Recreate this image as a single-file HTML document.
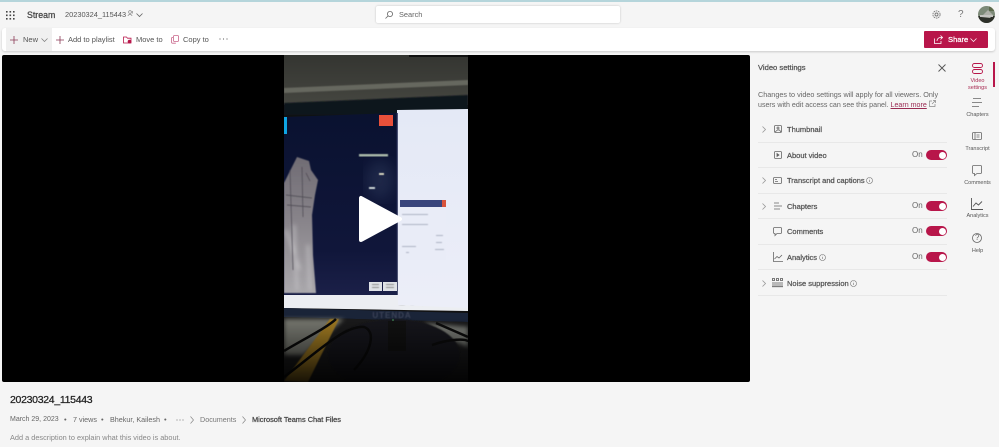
<!DOCTYPE html>
<html><head><meta charset="utf-8">
<style>
*{box-sizing:border-box}
html,body{margin:0;padding:0;background:#f5f5f5}
body{width:999px;height:447px;overflow:hidden;position:relative;font-family:"Liberation Sans",sans-serif;color:#424242;filter:blur(.3px)}
.t{position:absolute;white-space:nowrap;font-size:7.5px;line-height:10px}
.sb{-webkit-text-stroke:.25px currentColor}
.a{position:absolute}
svg.i{position:absolute;overflow:visible;fill:none;stroke:#555;stroke-width:1}
.row{position:absolute;left:758px;width:189px;height:1px;background:#e8e8e8}
.lbl{position:absolute;left:787px;font-size:7.5px;line-height:10px;-webkit-text-stroke:.25px #555;color:#555;white-space:nowrap}
.on{position:absolute;left:912px;font-size:8px;line-height:10px;color:#666}
.tg{position:absolute;left:926px;width:21px;height:10px;border-radius:5px;background:#b8164a}
.tg:after{content:"";position:absolute;right:1.500px;top:1.500px;width:7px;height:7px;border-radius:50%;background:#fff}
.rl{position:absolute;left:962px;width:31px;text-align:center;font-size:5.500px;line-height:6.500px;color:#555}
</style></head><body>
<div class="a" style="left:0;top:0;width:999px;height:2px;background:#b5d5db"></div>

<svg class="i" style="left:6px;top:11px;stroke:none;fill:#444" width="9" height="9">
<rect x="0" y="0" width="1.600" height="1.600"/><rect x="3.500" y="0" width="1.600" height="1.600"/><rect x="7" y="0" width="1.600" height="1.600"/>
<rect x="0" y="3.500" width="1.600" height="1.600"/><rect x="3.500" y="3.500" width="1.600" height="1.600"/><rect x="7" y="3.500" width="1.600" height="1.600"/>
<rect x="0" y="7" width="1.600" height="1.600"/><rect x="3.500" y="7" width="1.600" height="1.600"/><rect x="7" y="7" width="1.600" height="1.600"/></svg>
<div class="t sb" style="left:27px;top:10px;font-size:8.800px;color:#444">Stream</div>
<div class="t" style="left:65px;top:10px;font-size:7.400px;color:#555">20230324_115443</div>
<svg class="i" style="left:127px;top:10px;stroke:#888;stroke-width:.7" width="7" height="7"><circle cx="3" cy="2" r="1.400"/><path d="M1 6c.3-2 3.700-2 4 0M5.500 1v2.500"/></svg>
<svg class="i" style="left:136px;top:13px;stroke:#666;stroke-width:.8" width="7" height="4"><path d="M.5.5l3 3 3-3"/></svg>

<div class="a" style="left:376px;top:6px;width:244px;height:17px;background:#fff;border-radius:2px;box-shadow:0 0 2px rgba(0,0,0,.2)"></div>
<svg class="i" style="left:385px;top:11px;stroke:#666;stroke-width:.8" width="8" height="8"><circle cx="5" cy="3" r="2.600"/><path d="M3 5L.5 7.500"/></svg>
<div class="t" style="left:399px;top:10px;color:#666;font-size:7.400px">Search</div>

<svg class="i" style="left:932px;top:10px;stroke:#777;stroke-width:.9" width="9" height="9"><circle cx="4.500" cy="4.500" r="1.500"/><circle cx="4.500" cy="4.500" r="3.600" stroke-dasharray="1.600 .7"/></svg>
<div class="t" style="left:958px;top:10px;font-size:10px;color:#777">?</div>
<svg class="a" style="left:978px;top:6px" width="17" height="17"><defs><clipPath id="c"><circle cx="8.500" cy="8.500" r="8.500"/></clipPath></defs><g clip-path="url(#c)"><rect width="17" height="17" fill="#7d8a78"/><rect y="10" width="17" height="7" fill="#2d3029"/><path d="M3 11L10 4l5 5-3 3z" fill="#aeb0a8"/><rect x="2" y="9" width="13" height="2" fill="#c4c4c0"/><rect x="11" width="6" height="5" fill="#5c6a4c"/></g></svg>

<div class="a" style="left:2px;top:28px;width:993px;height:23px;background:#fff;border-radius:3px;box-shadow:0 1px 2px rgba(0,0,0,.18)"></div>
<div class="a" style="left:6px;top:28px;width:46px;height:23px;background:#f0f0f0"></div>
<svg class="i" style="left:10px;top:36px;stroke:#8a3a55;stroke-width:.8" width="8" height="8"><path d="M4 0v8M0 4h8"/></svg>
<div class="t" style="left:23px;top:35px;color:#555">New</div>
<svg class="i" style="left:41px;top:38px;stroke:#777;stroke-width:.7" width="7" height="4"><path d="M.5.5l3 3 3-3"/></svg>
<svg class="i" style="left:56px;top:36px;stroke:#8a3a55;stroke-width:.8" width="8" height="8"><path d="M4 0v8M0 4h8"/></svg>
<div class="t" style="left:68px;top:35px;color:#555">Add to playlist</div>
<svg class="i" style="left:123px;top:36px;stroke:#b8164a;stroke-width:.8" width="9" height="8"><path d="M.5 7V1h3l1 1.200h3.500V7z"/><circle cx="6.500" cy="5.600" r="1.800" fill="#b8164a" stroke="none"/></svg>
<div class="t" style="left:136px;top:35px;color:#555">Move to</div>
<svg class="i" style="left:171px;top:35px;stroke:#c9668a;stroke-width:.8" width="8" height="9"><rect x="2.500" y=".5" width="5" height="6" rx="1"/><path d="M2 2.500H1.200a.7.7 0 0 0-.7.7v4a1 1 0 0 0 1 1h3.300"/></svg>
<div class="t" style="left:183px;top:35px;color:#555">Copy to</div>
<svg class="a" style="left:219px;top:38px" width="10" height="2"><circle cx="1" cy="1" r=".6" fill="#666"/><circle cx="4.500" cy="1" r=".6" fill="#666"/><circle cx="8" cy="1" r=".6" fill="#666"/></svg>

<div class="a" style="left:924px;top:31px;width:64px;height:17px;background:#b8164a;border-radius:1px"></div>
<svg class="i" style="left:934px;top:35px;stroke:#fff;stroke-width:.8" width="9" height="9"><path d="M.5 3.500v5h6.500V6M3 6c0-2 1.500-3.500 3.500-3.500h2M6.500.5l2 2-2 2"/></svg>
<div class="t sb" style="left:948px;top:35px;color:#fff;font-size:7.600px">Share</div>
<svg class="i" style="left:970px;top:38px;stroke:#fff;stroke-width:.7" width="7" height="4"><path d="M.5.5l3 3 3-3"/></svg>

<div class="a" style="left:2px;top:55px;width:748px;height:327px;background:#000;border-radius:2px"></div>
<svg class="a" style="left:284px;top:55px" width="184" height="327">
<defs>
<linearGradient id="g1" x1="0" y1="0" x2="0" y2="1"><stop offset="0" stop-color="#0a1230"/><stop offset=".75" stop-color="#10163a"/><stop offset="1" stop-color="#1b2048"/></linearGradient>
<linearGradient id="g2" x1="0" y1="0" x2="0" y2="1"><stop offset="0" stop-color="#e4e9f6"/><stop offset="1" stop-color="#eceef8"/></linearGradient>
<linearGradient id="g3" x1="0" y1="0" x2="0" y2="1"><stop offset="0" stop-color="#343531"/><stop offset="1" stop-color="#454640"/></linearGradient>
<linearGradient id="p" x1="0" y1="0" x2="0" y2="1"><stop offset="0" stop-color="#706c74"/><stop offset=".5" stop-color="#8a868c"/><stop offset="1" stop-color="#aaa8ac"/></linearGradient>
<linearGradient id="fd" x1="0" y1="0" x2="0" y2="1"><stop offset="0" stop-color="#000" stop-opacity="0"/><stop offset="1" stop-color="#000" stop-opacity=".85"/></linearGradient>
<filter id="b"><feGaussianBlur stdDeviation=".6"/></filter>
<filter id="b2"><feGaussianBlur stdDeviation="2"/></filter>
<filter id="b3"><feGaussianBlur stdDeviation="7"/></filter>
</defs>
<rect width="184" height="327" fill="#111"/>
<rect width="184" height="50" fill="url(#g3)"/>
<path d="M0 33L184 25v5L0 38z" fill="#66675f" filter="url(#b)"/>
<rect x="125" y="0" width="60" height="2" fill="#111"/>
<path d="M0 48L184 40v20H0z" fill="#10131c" filter="url(#b)"/>
<path d="M113 55L184 54v200L113 250z" fill="url(#g2)"/>
<path d="M0 62L113 58V240H0z" fill="url(#g1)"/>
<rect x="0" y="62" width="3" height="17" fill="#0ea5e4"/>
<rect x="95" y="60" width="14" height="11" fill="#e8503a"/>
<rect x="75" y="99" width="29" height="2.500" fill="#a8b8a8" filter="url(#b)"/>
<ellipse cx="96" cy="125" rx="14" ry="20" fill="#2d3a5c" filter="url(#b3)" opacity=".5"/>
<rect x="95" y="118" width="5" height="2" fill="#d8d8c0" filter="url(#b)"/>
<rect x="85" y="132" width="6" height="2" fill="#cfd8d8" filter="url(#b)"/>
<path d="M0 128L13 102 25 106 27 115 34 125 31 140 28 160 29 200 32 238H0z" fill="url(#p)" filter="url(#b)"/>
<path d="M2 175l14 40M10 170l3 65M24 190l2 45" stroke="#c4c2c6" stroke-width="2" fill="none" filter="url(#b2)"/>
<path d="M6 115l3 100M18 112l1 50M2 140l26 3M3 150l24 2M22 118l4 8" stroke="#4a4650" stroke-width=".7" fill="none" filter="url(#b)"/>
<path d="M113 58V240" stroke="#1a2148" stroke-width="1.500"/>
<path d="M0 240H114V250L184 253V256L0 253z" fill="#eceef2"/>
<rect x="85" y="227" width="13" height="9" fill="#dfe2e6"/>
<rect x="99" y="227" width="14" height="9" fill="#dfe2e6"/>
<g filter="url(#b)"><rect x="88" y="229" width="7" height="1" fill="#888"/><rect x="88" y="232" width="7" height="1" fill="#888"/><rect x="102" y="229" width="8" height="1" fill="#888"/><rect x="102" y="232" width="8" height="1" fill="#888"/></g>
<rect x="116" y="150" width="46" height="55" fill="#e9ecf7"/>
<rect x="116" y="145" width="46" height="7" fill="#39457c"/>
<rect x="158" y="145" width="4" height="7" fill="#d8533c"/>
<g filter="url(#b)" fill="#aeb3c4"><rect x="118" y="159" width="26" height="1"/><rect x="118" y="169" width="26" height="1"/><rect x="152" y="180" width="7" height="1"/><rect x="152" y="187" width="6" height="1"/><rect x="118" y="191" width="14" height="1"/><rect x="151" y="194" width="9" height="1"/><rect x="122" y="197" width="3" height="1"/></g>
<path d="M0 253L184 258V267L0 262z" fill="#1a2438"/>
<path d="M0 262L184 267V327H0z" fill="#1a1a1b"/>
<path d="M0 264H60L20 300H0z" fill="#77786f" filter="url(#b2)"/>
<path d="M140 268L184 272V292L160 282z" fill="#787a74" filter="url(#b2)"/>
<ellipse cx="110" cy="300" rx="66" ry="36" fill="#19181a" filter="url(#b)"/>
<path d="M0 326L46 264H55L24 327z" fill="#a27c22" filter="url(#b)"/>
<path d="M0 296C20 284 44 272 52 264M0 322C30 300 60 270 80 272C92 276 88 296 70 315" stroke="#0a0a0a" stroke-width="2.500" fill="none"/>
<path d="M148 290C165 284 184 283 184 287M152 268L184 282" stroke="#0c0c0c" stroke-width="2.500" fill="none"/>
<rect x="104" y="266" width="18" height="30" fill="#111"/>
<rect y="262" width="184" height="65" fill="url(#fd)"/>
<text x="108" y="263" text-anchor="middle" font-family="Liberation Sans" font-size="8" font-weight="bold" fill="#3a4256" letter-spacing="1" filter="url(#b)">UTENDA</text>
<circle cx="109" cy="265" r=".8" fill="#4da860"/>
</svg>
<svg class="a" style="left:357px;top:192px" width="48" height="54"><path d="M4 6V48L43 27z" fill="#fff" stroke="#fff" stroke-width="4" stroke-linejoin="round"/></svg>

<div class="t sb" style="left:758px;top:63px;color:#555;font-size:7.600px">Video settings</div>
<svg class="i" style="left:938px;top:64px;stroke:#555;stroke-width:.9" width="8" height="8"><path d="M.5.5l7 7M7.500.5l-7 7"/></svg>
<div class="t" style="left:758px;top:90px;color:#666;font-size:7.250px">Changes to video settings will apply for all viewers. Only</div>
<div class="t" style="left:758px;top:100px;color:#666;font-size:7.100px">users with edit access can see this panel. <span style="color:#9a2a52;text-decoration:underline">Learn more</span></div>
<svg class="i" style="left:929px;top:100px;stroke:#888;stroke-width:.7" width="7" height="7"><path d="M3 1H.5v5.500h5.500V4M3 4l3.500-3.500M4 .5h2.500V3"/></svg>

<svg class="i" style="left:762px;top:126px;stroke:#999;stroke-width:.8" width="4" height="7"><path d="M.5.5l3 3-3 3"/></svg>
<svg class="i" style="left:774px;top:125px;stroke:#666;stroke-width:.8" width="8" height="8"><rect x=".5" y=".5" width="7" height="7" rx="1"/><circle cx="4" cy="3" r="1"/><path d="M1 7l2.500-2h2L7 7"/></svg>
<div class="lbl" style="top:125px">Thumbnail</div>
<div class="row" style="top:142px"></div>
<svg class="i" style="left:774px;top:151px;stroke:#666;stroke-width:.8" width="8" height="8"><rect x=".5" y=".5" width="7" height="7" rx="1"/><path d="M3 2.500v3l2-1.500z" fill="#555"/></svg>
<div class="lbl" style="top:151px">About video</div>
<div class="on" style="top:150px">On</div><div class="tg" style="top:150px"></div>
<div class="row" style="top:167px"></div>
<svg class="i" style="left:762px;top:177px;stroke:#999;stroke-width:.8" width="4" height="7"><path d="M.5.5l3 3-3 3"/></svg>
<svg class="i" style="left:773px;top:177px;stroke:#666;stroke-width:.8" width="9" height="7"><rect x=".5" y=".5" width="8" height="6" rx="1"/><path d="M2 2.500h2M2 4.500h3"/></svg>
<div class="lbl" style="top:176px">Transcript and captions</div>
<svg class="i" style="left:866px;top:177px;stroke:#777;stroke-width:.6" width="7" height="7"><circle cx="3.500" cy="3.500" r="3"/><path d="M3.500 3v2M3.500 1.800v.5"/></svg>
<div class="row" style="top:193px"></div>
<svg class="i" style="left:762px;top:203px;stroke:#999;stroke-width:.8" width="4" height="7"><path d="M.5.5l3 3-3 3"/></svg>
<svg class="i" style="left:774px;top:202px;stroke:#666;stroke-width:.8" width="8" height="8"><path d="M0 1h5M0 4h8M0 7h6"/></svg>
<div class="lbl" style="top:202px">Chapters</div>
<div class="on" style="top:201px">On</div><div class="tg" style="top:201px"></div>
<div class="row" style="top:218px"></div>
<svg class="i" style="left:773px;top:227px;stroke:#666;stroke-width:.8" width="9" height="9"><path d="M1.500.5h6a1 1 0 0 1 1 1v4a1 1 0 0 1-1 1H4L2 8.500V6.500h-.5a1 1 0 0 1-1-1v-4a1 1 0 0 1 1-1z"/></svg>
<div class="lbl" style="top:227px">Comments</div>
<div class="on" style="top:226px">On</div><div class="tg" style="top:226px"></div>
<div class="row" style="top:244px"></div>
<svg class="i" style="left:773px;top:252px;stroke:#666;stroke-width:.8" width="10" height="10"><path d="M.5 0v9.500H10M1.500 7L4 4.500l2 1.500 3-3"/></svg>
<div class="lbl" style="top:253px">Analytics</div>
<svg class="i" style="left:819px;top:254px;stroke:#777;stroke-width:.6" width="7" height="7"><circle cx="3.500" cy="3.500" r="3"/><path d="M3.500 3v2M3.500 1.800v.5"/></svg>
<div class="on" style="top:252px">On</div><div class="tg" style="top:252px"></div>
<div class="row" style="top:269px"></div>
<svg class="i" style="left:762px;top:280px;stroke:#999;stroke-width:.8" width="4" height="7"><path d="M.5.5l3 3-3 3"/></svg>
<svg class="i" style="left:772px;top:278px;stroke:#555;stroke-width:.8" width="11" height="9"><path d="M0 5h11M0 7h11M0 8.700h11"/><path d="M.5.500h2v2h-2zM4.500.500h2v2h-2zM8.500.500h2v2h-2z"/></svg>
<div class="lbl" style="top:279px">Noise suppression</div>
<svg class="i" style="left:850px;top:280px;stroke:#777;stroke-width:.6" width="7" height="7"><circle cx="3.500" cy="3.500" r="3"/><path d="M3.500 3v2M3.500 1.800v.5"/></svg>
<div class="row" style="top:295px"></div>

<div class="a" style="left:993px;top:62px;width:2px;height:25px;background:#b8164a"></div>
<svg class="i" style="left:972px;top:63px;stroke:#b8164a;stroke-width:.9" width="11" height="11"><rect x=".5" y=".5" width="10" height="4" rx="2"/><rect x=".5" y="6.500" width="10" height="4" rx="2"/></svg>
<div class="rl" style="top:78px;color:#a82a52">Video<br>settings</div>
<svg class="i" style="left:972px;top:98px;stroke:#666;stroke-width:.8" width="10" height="10"><path d="M1 .5h8M0 4.500h10M0 8.500h7"/></svg>
<div class="rl" style="top:112px">Chapters</div>
<svg class="i" style="left:972px;top:132px;stroke:#666;stroke-width:.8" width="10" height="8"><rect x=".5" y=".5" width="9" height="7" rx="1"/><path d="M3 .5v7M4.500 3h3M4.500 5h3"/></svg>
<div class="rl" style="top:146px">Transcript</div>
<svg class="i" style="left:972px;top:165px;stroke:#666;stroke-width:.8" width="10" height="11"><path d="M1.500.5h7a1 1 0 0 1 1 1v6a1 1 0 0 1-1 1H5L2.500 10.500V8.500h-1a1 1 0 0 1-1-1v-6a1 1 0 0 1 1-1z"/></svg>
<div class="rl" style="top:180px">Comments</div>
<svg class="i" style="left:971px;top:198px;stroke:#555;stroke-width:.9" width="12" height="12"><path d="M.5 0v11.500H12M2 8.500L5 5l2.500 2L11 3.500"/></svg>
<div class="rl" style="top:213px">Analytics</div>
<svg class="i" style="left:972px;top:233px;stroke:#666;stroke-width:.8" width="10" height="10"><circle cx="5" cy="5" r="4.500"/></svg>
<div class="t" style="left:975px;top:233px;font-size:8px;color:#666">?</div>
<div class="rl" style="top:248px">Help</div>

<div class="t sb" style="left:10px;top:394px;font-size:10.500px;line-height:12px;color:#222;letter-spacing:-.3px">20230324_115443</div>
<div class="t" style="left:10px;top:415px;color:#666;font-size:7px">March 29, 2023</div>
<div class="t" style="left:64px;top:415px;color:#666">•</div>
<div class="t" style="left:73px;top:415px;color:#666;font-size:7.200px">7 views</div>
<div class="t" style="left:101px;top:415px;color:#666">•</div>
<div class="t" style="left:110px;top:415px;color:#666;font-size:7.200px">Bhekur, Kailesh</div>
<div class="t" style="left:164px;top:415px;color:#666">•</div>
<svg class="a" style="left:176px;top:419px" width="10" height="2"><circle cx="1" cy="1" r=".6" fill="#888"/><circle cx="4" cy="1" r=".6" fill="#888"/><circle cx="7" cy="1" r=".6" fill="#888"/></svg>
<svg class="i" style="left:190px;top:416px;stroke:#888;stroke-width:.7" width="4" height="8"><path d="M.5.5l3 3.500-3 3.500"/></svg>
<div class="t" style="left:200px;top:415px;color:#777;font-size:7.200px">Documents</div>
<svg class="i" style="left:242px;top:416px;stroke:#888;stroke-width:.7" width="4" height="8"><path d="M.5.5l3 3.500-3 3.500"/></svg>
<div class="t sb" style="left:252px;top:415px;color:#444;font-size:7.400px">Microsoft Teams Chat Files</div>
<div class="t" style="left:10px;top:433px;color:#888;font-size:7.350px">Add a description to explain what this video is about.</div>
</body></html>
